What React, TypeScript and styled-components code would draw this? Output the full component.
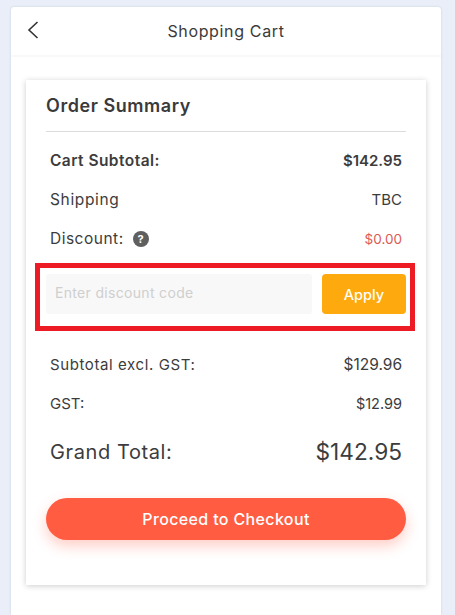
import React from "react";
import styled, { createGlobalStyle } from "styled-components";

const Global = createGlobalStyle`
  html, body { margin: 0; padding: 0; height: 615px; overflow: hidden; background: #e9eef8; }
  * { box-sizing: border-box; }
  body { font-family: Inter, "Open Sans", "Liberation Sans", sans-serif; color: #383838; }
`;

const Shell = styled.div`
  width: 430px;
  height: 608px;
  margin: 7px 0 0 11px;
  background: #fff;
  border-radius: 3px 3px 0 0;
  box-shadow: 0 0 2px rgba(120, 130, 150, 0.3);
  display: flex;
  flex-direction: column;
`;

const Header = styled.header`
  height: 50px;
  display: grid;
  grid-template-columns: 50px 1fr 50px;
  align-items: center;
  border-bottom: 2px solid #f9f9f9;
`;

const BackButton = styled.button`
  border: 0;
  background: none;
  padding: 0 0 3px 15px;
  display: flex;
  color: #333;
`;

const HeaderTitle = styled.h1`
  margin: 0;
  text-align: center;
  font-size: 16px;
  font-weight: 400;
  color: #3a3a3a;
  letter-spacing: 0.65px;
`;

const Card = styled.section`
  width: 400px;
  height: 505px;
  margin: 23px 0 0 15px;
  padding: 0 20px;
  background: #fff;
  box-shadow: 0 1px 6px rgba(0, 0, 0, 0.2);
  display: flex;
  flex-direction: column;
`;

const CardTitle = styled.h2`
  margin: 0 0 9px;
  height: 52px;
  padding-top: 14px;
  font-size: 18px;
  line-height: 24px;
  font-weight: 600;
  letter-spacing: 0.55px;
  color: #3a3a3a;
  border-bottom: 1px solid #dcdcdc;
`;

const Row = styled.div<{ $height?: number }>`
  height: ${(p) => p.$height ?? 39}px;
  padding: 0 4px;
  display: flex;
  align-items: center;
  justify-content: space-between;
`;

const Label = styled.span<{ $size?: number; $bold?: boolean; $spacing?: number }>`
  display: flex;
  align-items: center;
  gap: 9px;
  font-size: ${(p) => p.$size ?? 15.5}px;
  font-weight: ${(p) => (p.$bold ? 600 : 400)};
  letter-spacing: ${(p) => p.$spacing ?? 0.5}px;
  color: #3c3c3c;
`;

const Value = styled.span<{ $size?: number; $bold?: boolean; $red?: boolean }>`
  font-size: ${(p) => p.$size ?? 15}px;
  font-weight: ${(p) => (p.$bold ? 600 : 400)};
  color: ${(p) => (p.$red ? "#dc5a54" : "#3c3c3c")};
`;

const Help = styled.span`
  width: 16px;
  height: 16px;
  border-radius: 50%;
  background: #5f5f5f;
  color: #fff;
  font-size: 11px;
  font-weight: 700;
  letter-spacing: 0;
  display: flex;
  align-items: center;
  justify-content: center;
`;

const DiscountHighlight = styled.div`
  margin: 5px -9px 0 -11px;
  height: 68px;
  border: 5px solid #ed1c24;
  padding: 6px 4px 0 6px;
  display: flex;
  gap: 10px;
  align-items: flex-start;
`;

const CodeInput = styled.input`
  flex: 1;
  min-width: 0;
  height: 40px;
  border: 0;
  border-radius: 3px;
  background: #f8f8f8;
  padding: 0 9px 3px;
  font: 400 14px Inter, sans-serif;
  letter-spacing: 0.32px;
  &::placeholder { color: #cfcfcf; opacity: 1; }
`;

const ApplyButton = styled.button`
  width: 84px;
  height: 40px;
  border: 0;
  border-radius: 4px;
  background: #fea90d;
  color: #fff;
  font: 500 14.5px Inter, sans-serif;
`;

const Totals = styled.div`
  margin-top: 14px;
  display: flex;
  flex-direction: column;
`;

const CheckoutButton = styled.button`
  margin-top: 18px;
  height: 42px;
  border: 0;
  border-radius: 21px;
  background: #ff5c41;
  color: #fff;
  font: 500 16px Inter, sans-serif;
  letter-spacing: 0.36px;
  box-shadow: 0 6px 14px rgba(255, 92, 65, 0.3);
`;

export default function App() {
  return (
    <>
      <Global />
      <Shell>
        <Header>
          <BackButton aria-label="Back">
            <svg width="14" height="20" viewBox="0 0 14 20" fill="none" stroke="currentColor" strokeWidth="1.6">
              <path d="M11.5 2 L3 10 L11.5 18" />
            </svg>
          </BackButton>
          <HeaderTitle>Shopping Cart</HeaderTitle>
        </Header>
        <Card>
          <CardTitle>Order Summary</CardTitle>
          <Row>
            <Label $bold $spacing={0.45}>Cart Subtotal:</Label>
            <Value $bold>$142.95</Value>
          </Row>
          <Row>
            <Label $spacing={0.65}>Shipping</Label>
            <Value>TBC</Value>
          </Row>
          <Row>
            <Label>
              Discount: <Help>?</Help>
            </Label>
            <Value $size={13.5} $red>$0.00</Value>
          </Row>
          <DiscountHighlight>
            <CodeInput placeholder="Enter discount code" />
            <ApplyButton>Apply</ApplyButton>
          </DiscountHighlight>
          <Totals>
            <Row>
              <Label $size={15} $spacing={0.6}>Subtotal excl. GST:</Label>
              <Value $size={15.5}>$129.96</Value>
            </Row>
            <Row>
              <Label $size={15} $spacing={0}>GST:</Label>
              <Value $size={14.5}>$12.99</Value>
            </Row>
            <Row $height={57}>
              <Label $size={20} $spacing={0.6}>Grand Total:</Label>
              <Value $size={22.7}>$142.95</Value>
            </Row>
          </Totals>
          <CheckoutButton>Proceed to Checkout</CheckoutButton>
        </Card>
      </Shell>
    </>
  );
}
